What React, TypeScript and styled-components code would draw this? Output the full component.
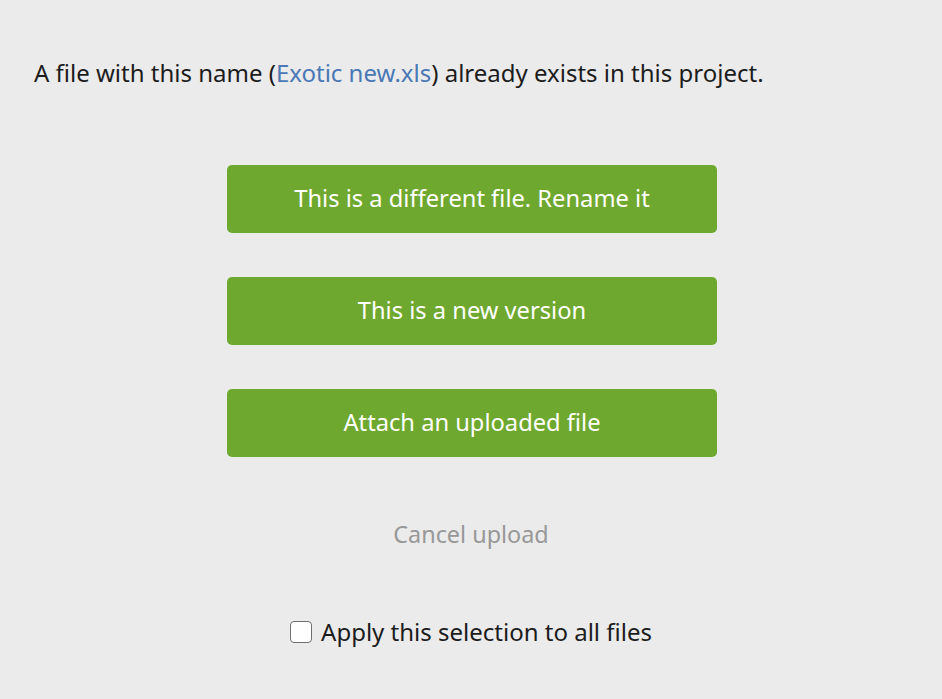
import React, { useState } from "react";
import styled, { createGlobalStyle } from "styled-components";

const Global = createGlobalStyle`
  html, body { margin: 0; padding: 0; background: #ebebeb; }
  body { font-family: "Noto Sans", "Open Sans", sans-serif; }
`;

const Page = styled.div`
  width: 942px;
  height: 699px;
  box-sizing: border-box;
  padding-top: 56px;
  display: flex;
  flex-direction: column;
`;

const Message = styled.p`
  margin: 0 0 0 34px;
  font-size: 24px;
  line-height: 34px;
  color: #1c1c1c;
`;

const Link = styled.a`
  color: #4a78b5;
  text-decoration: none;
`;

const Actions = styled.div`
  margin-top: 75px;
  padding-left: 2px;
  display: flex;
  flex-direction: column;
  align-items: center;
  gap: 44px;
`;

const ActionButton = styled.button`
  width: 490px;
  height: 68px;
  padding: 0 0 2px;
  border: none;
  border-radius: 5px;
  background: #6fa82f;
  color: #ffffff;
  font-family: inherit;
  font-size: 23.7px;
  cursor: pointer;
`;

const Cancel = styled.button`
  margin-top: 56px;
  padding: 0 0 2px;
  background: none;
  border: none;
  font-family: inherit;
  font-size: 23.4px;
  color: #989898;
  align-self: center;
  height: 44px;
  cursor: pointer;
`;

const CheckRow = styled.label`
  margin-top: 59px;
  align-self: center;
  display: flex;
  align-items: center;
  gap: 9px;
  font-size: 24px;
  line-height: 32px;
  color: #1c1c1c;
  cursor: pointer;
`;

const Box = styled.span<{ $checked: boolean }>`
  width: 22px;
  height: 22px;
  border: 1px solid #6f6f6f;
  border-radius: 4px;
  background: ${(p) => (p.$checked ? "#6fa82f" : "#ffffff")};
  box-sizing: border-box;
`;

export default function App() {
  const [checked, setChecked] = useState(false);
  return (
    <>
      <Global />
      <Page>
        <Message>
          A file with this name (<Link href="#">Exotic new.xls</Link>) already exists in this project.
        </Message>
        <Actions>
          <ActionButton>This is a different file. Rename it</ActionButton>
          <ActionButton>This is a new version</ActionButton>
          <ActionButton>Attach an uploaded file</ActionButton>
        </Actions>
        <Cancel>Cancel upload</Cancel>
        <CheckRow onClick={() => setChecked(!checked)}>
          <Box $checked={checked} />
          Apply this selection to all files
        </CheckRow>
      </Page>
    </>
  );
}
